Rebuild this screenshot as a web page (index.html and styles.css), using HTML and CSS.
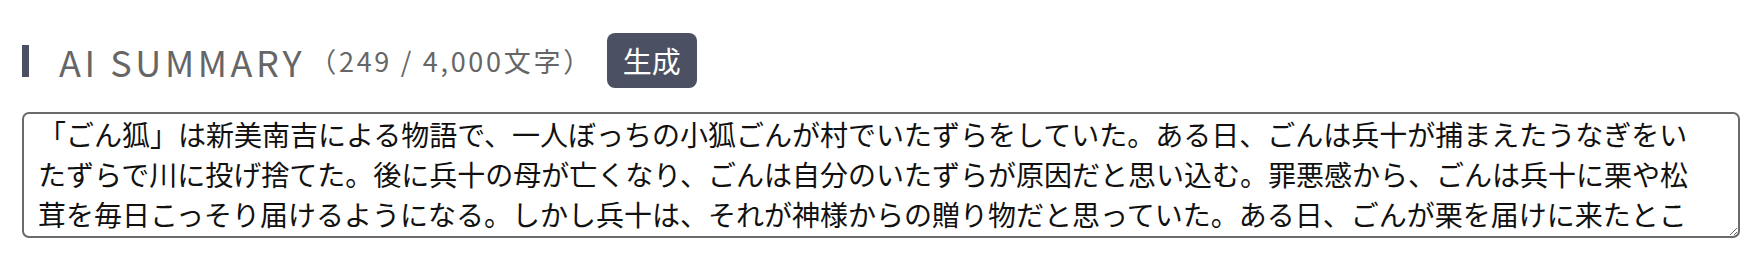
FILE: index.html
```html
<!DOCTYPE html>
<html lang="ja">
<head>
<meta charset="utf-8">
<link rel="stylesheet" href="styles.css">
</head>
<body>
<section class="summary">
  <div class="summary-head">
    <span class="bar"></span>
    <h2 class="title">AI SUMMARY</h2>
    <span class="count">（249 / 4,000文字）</span>
    <button class="gen-btn" type="button">生成</button>
  </div>
  <textarea class="summary-text" rows="3">「ごん狐」は新美南吉による物語で、一人ぼっちの小狐ごんが村でいたずらをしていた。ある日、ごんは兵十が捕まえたうなぎをいたずらで川に投げ捨てた。後に兵十の母が亡くなり、ごんは自分のいたずらが原因だと思い込む。罪悪感から、ごんは兵十に栗や松茸を毎日こっそり届けるようになる。しかし兵十は、それが神様からの贈り物だと思っていた。ある日、ごんが栗を届けに来たところ、兵十はごんがまたいたずらをしに来たと思い、火縄銃で撃ってしまう。倒れたごんのそばに栗が置いてあるのを見て、兵十は初めて、栗を届けていたのがごんだったと気づくのだった。</textarea>
</section>
</body>
</html>
```
FILE: styles.css
```css
html, body {
  margin: 0;
  padding: 0;
  background: #ffffff;
}

body {
  font-family: "Noto Sans CJK JP", "Noto Sans", sans-serif;
}

.summary {
  padding: 33px 24px 0 22px;
}

.summary-head {
  display: flex;
  align-items: center;
  height: 55px;
}

.bar {
  width: 7px;
  height: 32px;
  background: #4b5163;
  margin-right: 30px;
  flex: none;
}

.title {
  margin: 0;
  font-size: 36px;
  font-weight: 400;
  color: #666666;
  letter-spacing: 0.1em;
  line-height: 1;
}

.count {
  font-size: 27px;
  color: #666666;
  letter-spacing: 0.1em;
  margin-left: 4px;
  line-height: 1;
}

.gen-btn {
  margin-left: 14px;
  width: 90px;
  height: 55px;
  border: none;
  border-radius: 8px;
  background: #4b5163;
  color: #ffffff;
  font-family: "Noto Sans CJK JP", sans-serif;
  font-size: 29px;
  padding: 0;
  line-height: 1;
}

.summary-text {
  display: block;
  box-sizing: border-box;
  margin-top: 24px;
  width: 1718px;
  height: 126px;
  border: 2px solid #6a6a6a;
  border-radius: 7px;
  padding: 0 30px 0 14px;
  font-family: "Noto Sans CJK JP", sans-serif;
  font-size: 28px;
  line-height: 40px;
  color: #111111;
  overflow: hidden;
  background: #ffffff;
}
```
